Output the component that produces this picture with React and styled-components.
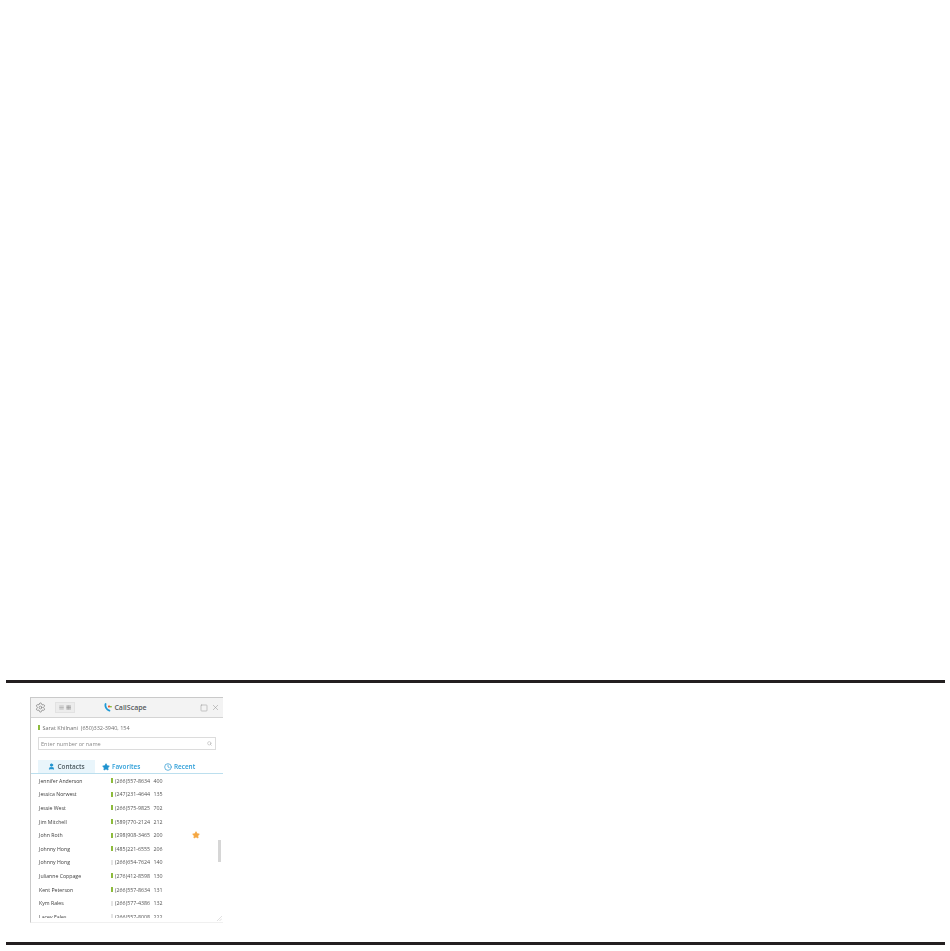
import React from 'react';
import styled, { createGlobalStyle } from 'styled-components';
import { Settings, Square, X, Search, User, Star, Clock, AlignJustify, Grip } from 'lucide-react';

const GlobalStyle = createGlobalStyle`
  html, body {
    margin: 0;
    padding: 0;
    background: #ffffff;
    font-family: "Open Sans", "Liberation Sans", sans-serif;
  }
`;

const Page = styled.div`
  width: 950px;
  height: 951px;
  padding-top: 680px;
  box-sizing: border-box;
  overflow: hidden;
`;

const Rule = styled.div`
  height: 3px;
  margin: 0 5px 0 6px;
  background: #231f20;
`;

const Window = styled.div`
  width: 193px;
  height: 226px;
  margin: 14px 0 19px 30px;
  box-sizing: border-box;
  border-top: 1px solid #c9c9c9;
  border-left: 1px solid #c9c9c9;
  border-bottom: 1px solid #f0f0f0;
  display: flex;
  flex-direction: column;
  position: relative;
  overflow: hidden;
  filter: blur(0.35px);
`;

const TitleBar = styled.div`
  height: 19px;
  flex: none;
  display: flex;
  align-items: center;
  padding: 0 3px 0 4px;
  background: #f3f3f3;
  border-bottom: 1px solid #d4d4d4;
  color: #808080;
`;

const ViewSwitch = styled.div`
  display: flex;
  align-items: center;
  justify-content: space-evenly;
  width: 18px;
  height: 9px;
  margin-left: 9px;
  background: #ececec;
  border: 1px solid #e2e2e2;
  color: #8d8d8d;
`;

const Brand = styled.div`
  flex: 1;
  display: flex;
  align-items: center;
  justify-content: center;
  gap: 2px;
  padding-right: 24px;
  font-size: 7px;
  font-weight: 600;
  color: #55595c;
`;

const WindowButtons = styled.div`
  display: flex;
  align-items: center;
  gap: 3px;
  color: #8f8f8f;
`;

const Caller = styled.div`
  display: flex;
  align-items: center;
  height: 19px;
  flex: none;
  padding: 0 0 0 7px;
  font-size: 5.5px;
  color: #707070;
  gap: 2.5px;
`;

const StatusBar = styled.span`
  display: inline-block;
  flex: none;
  width: 2px;
  height: 5px;
  background: ${props => (props.$online ? '#8dbb3c' : '#e4e4e4')};
`;

const SearchBox = styled.div`
  flex: none;
  display: flex;
  align-items: center;
  justify-content: space-between;
  width: 178px;
  height: 13px;
  margin-left: 7px;
  padding: 0 3px 0 2px;
  box-sizing: border-box;
  border: 1px solid #dcdcdc;
  font-size: 5.6px;
  color: #8a8a8a;
`;

const Tabs = styled.div`
  flex: none;
  display: flex;
  height: 13px;
  margin-top: 10px;
  padding-left: 7px;
  border-bottom: 1px solid #bcdfee;
`;

const Tab = styled.div`
  display: flex;
  align-items: center;
  justify-content: ${props => (props.$active ? 'center' : 'flex-start')};
  gap: 2px;
  width: ${props => props.$width}px;
  padding-left: ${props => props.$inset || 0}px;
  box-sizing: border-box;
  background: ${props => (props.$active ? '#e9f5fb' : 'transparent')};
  color: ${props => (props.$active ? '#4d5a60' : '#2a9dd8')};
  font-size: 6.4px;
  font-weight: 600;

  svg {
    color: #1f92cf;
    flex: none;
  }
`;

const List = styled.div`
  flex: 1;
  min-height: 0;
  overflow: hidden;
  margin-bottom: 4px;
`;

const Row = styled.div`
  display: grid;
  grid-template-columns: 72px 4px 38.5px 38px 10px;
  align-items: center;
  height: 13.6px;
  padding-left: 8px;
  font-size: 5.3px;
  color: #555;
`;

const Name = styled.span`
  color: #3c3c3c;
  font-size: 5.2px;
  white-space: nowrap;
`;

const Phone = styled.span`
  white-space: nowrap;
`;

const Scrollbar = styled.div`
  position: absolute;
  right: 2px;
  top: 142px;
  width: 3px;
  height: 22px;
  background: #d6d6d6;
`;

const ResizeGrip = styled.svg`
  position: absolute;
  right: 1px;
  bottom: 1px;
`;

const contacts = [
  { name: 'Jennifer Anderson', phone: '(266)557-8634', ext: '400', online: true },
  { name: 'Jessica Norwest', phone: '(247)231-4644', ext: '135', online: true },
  { name: 'Jessie West', phone: '(266)575-9825', ext: '702', online: true },
  { name: 'Jim Mitchell', phone: '(589)770-2124', ext: '212', online: true },
  { name: 'John Roth', phone: '(298)908-3465', ext: '200', online: true, star: true },
  { name: 'Johnny Hong', phone: '(485)221-6555', ext: '206', online: true },
  { name: 'Johnny Hong', phone: '(266)654-7624', ext: '140' },
  { name: 'Julianne Coppage', phone: '(276)412-8598', ext: '130', online: true },
  { name: 'Kent Peterson', phone: '(266)557-8634', ext: '131', online: true },
  { name: 'Kym Rales', phone: '(266)577-4386', ext: '132' },
  { name: 'Lacey Eales', phone: '(266)557-8008', ext: '222' },
];

const Logo = () => (
  <svg width="8" height="9" viewBox="0 0 8 9" fill="none">
    <path d="M1.6 1 C0.8 3.4 2.4 6.6 5.4 7.6" stroke="#1f9ad6" strokeWidth="1.8" strokeLinecap="round" />
    <rect x="4" y="2.6" width="2" height="1.8" fill="#e8622c" />
    <rect x="6" y="3" width="1.8" height="1.4" fill="#8dbb3c" />
  </svg>
);

const App = () => (
  <>
    <GlobalStyle />
    <Page>
      <Rule />
      <Window>
        <TitleBar>
          <Settings size={11} strokeWidth={1.6} />
          <ViewSwitch>
            <AlignJustify size={5} strokeWidth={2.5} />
            <Grip size={5} strokeWidth={3} />
          </ViewSwitch>
          <Brand>
            <Logo />
            CallScape
          </Brand>
          <WindowButtons>
            <Square size={8} strokeWidth={1.4} />
            <X size={9} strokeWidth={1.3} />
          </WindowButtons>
        </TitleBar>
        <Caller>
          <StatusBar $online />
          Sarat Khilnani&nbsp; (650)332-3940, 154
        </Caller>
        <SearchBox>
          Enter number or name
          <Search size={5} strokeWidth={2} color="#999" />
        </SearchBox>
        <Tabs>
          <Tab $active $width={57}>
            <User size={7} strokeWidth={3} fill="currentColor" />
            Contacts
          </Tab>
          <Tab $width={62} $inset={7}>
            <Star size={8} fill="currentColor" />
            Favorites
          </Tab>
          <Tab $width={50} $inset={7}>
            <Clock size={8} strokeWidth={2} />
            Recent
          </Tab>
        </Tabs>
        <List>
          {contacts.map((contact, i) => (
            <Row key={i}>
              <Name>{contact.name}</Name>
              <StatusBar $online={contact.online} />
              <Phone>{contact.phone}</Phone>
              <span>{contact.ext}</span>
              {contact.star && <Star size={8} color="#f5a742" fill="#f5a742" />}
            </Row>
          ))}
        </List>
        <Scrollbar />
        <ResizeGrip width="5" height="5" viewBox="0 0 5 5">
          <path d="M0 5 L5 0 M2.5 5 L5 2.5" stroke="#d4d4d4" strokeWidth="0.7" />
        </ResizeGrip>
      </Window>
      <Rule />
    </Page>
  </>
);

export default App;
